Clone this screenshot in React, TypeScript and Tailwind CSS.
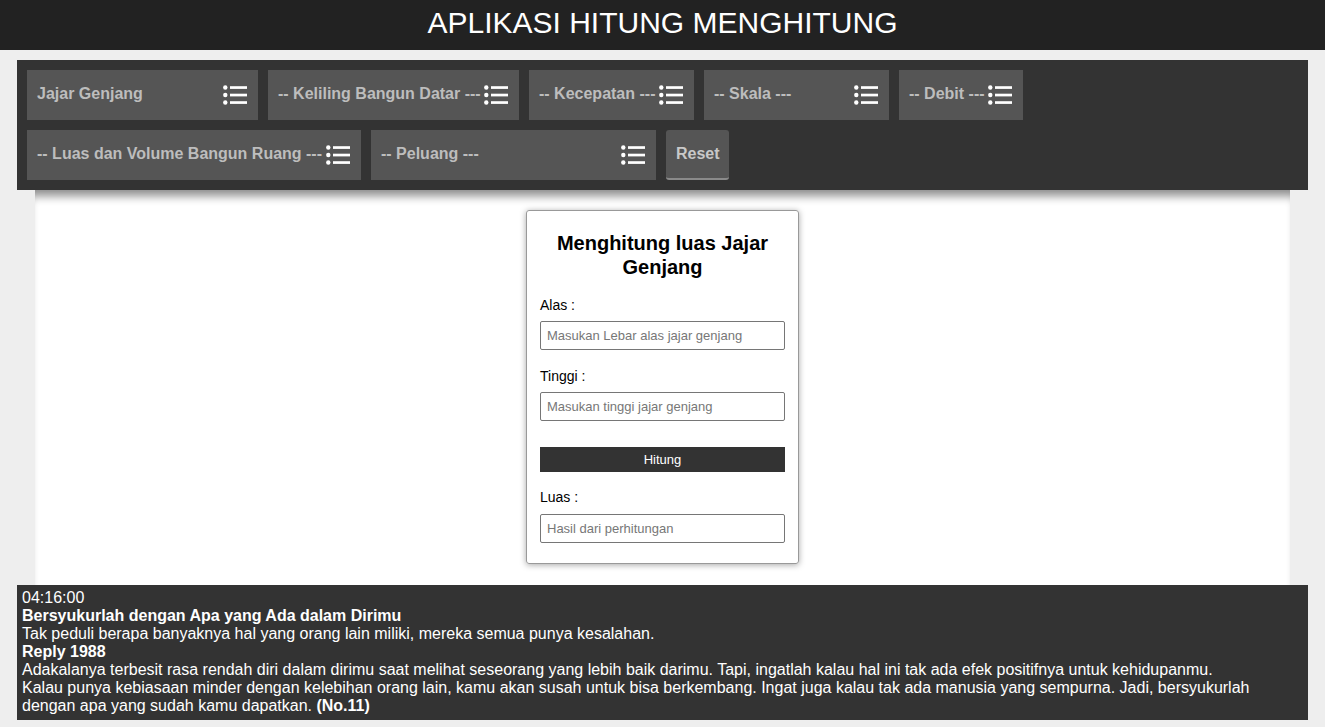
import React from "react";

function ListIcon() {
  return (
    <svg width="24" height="20" viewBox="0 0 24 20" fill="#fff" className="shrink-0">
      <circle cx="2.3" cy="2.5" r="2.2" />
      <circle cx="2.3" cy="10" r="2.2" />
      <circle cx="2.3" cy="17.5" r="2.2" />
      <rect x="7" y="1.2" width="17" height="2.7" />
      <rect x="7" y="8.7" width="17" height="2.7" />
      <rect x="7" y="16.2" width="17" height="2.7" />
    </svg>
  );
}

function SelectBox({ label, w }: { label: string; w: string }) {
  return (
    <div className={`relative h-[50px] ${w} bg-[#555] flex items-center pl-[10px] overflow-hidden`}>
      <span className="whitespace-nowrap text-[16px] font-bold text-[#bdbdbd] -mt-[2px]">{label}</span>
      <div className="absolute right-[11px] top-[15px] bg-[#555] pl-[1px]">
        <ListIcon />
      </div>
    </div>
  );
}

export default function App() {
  return (
    <div className="min-h-[727px] bg-[#eeeeee] font-['Liberation_Sans',Arial,sans-serif] text-black">
      <header className="h-[50px] bg-[#222] flex items-center justify-center">
        <h1 className="text-[30px] text-white leading-none -mt-[5px]">APLIKASI HITUNG MENGHITUNG</h1>
      </header>
      <div className="px-[17px] pt-[10px]">
        <nav className="bg-[#333] p-[10px] flex flex-col gap-[10px]">
          <div className="flex gap-[10px]">
            <SelectBox label="Jajar Genjang" w="w-[231px]" />
            <SelectBox label="-- Keliling Bangun Datar ---" w="w-[251px]" />
            <SelectBox label="-- Kecepatan ---" w="w-[165px]" />
            <SelectBox label="-- Skala ---" w="w-[185px]" />
            <SelectBox label="-- Debit ---" w="w-[124px]" />
          </div>
          <div className="flex gap-[10px]">
            <SelectBox label="-- Luas dan Volume Bangun Ruang ---" w="w-[334px]" />
            <SelectBox label="-- Peluang ---" w="w-[285px]" />
            <button className="h-[50px] w-[63px] bg-[#555] rounded-[3px] border-b-2 border-[#8a8a8a] text-[16px] font-bold text-[#c8c8c8] flex items-center pl-[10px]">
              Reset
            </button>
          </div>
        </nav>
        <main className="mx-[18px] bg-white pt-[20px] pb-[21px] flex justify-center shadow-[inset_0_12px_10px_-6px_rgba(0,0,0,0.45)]">
          <div className="w-[273px] border border-[#999] rounded-[3px] shadow-[0_1px_6px_rgba(0,0,0,0.35)] px-[13px] pt-[20px] pb-[20px]">
            <h2 className="text-[20px] font-bold text-center leading-[24px]">Menghitung luas Jajar Genjang</h2>
            <div className="mt-[18px] text-[14px] leading-[16px]">Alas :</div>
            <input
              className="mt-[8px] block w-full h-[29px] border border-[#767676] rounded-[2px] px-[6px] text-[13px] placeholder:text-[#777] outline-none"
              placeholder="Masukan Lebar alas jajar genjang"
            />
            <div className="mt-[18px] text-[14px] leading-[16px]">Tinggi :</div>
            <input
              className="mt-[8px] block w-full h-[29px] border border-[#767676] rounded-[2px] px-[6px] text-[13px] placeholder:text-[#777] outline-none"
              placeholder="Masukan tinggi jajar genjang"
            />
            <button className="mt-[26px] block w-full h-[25px] bg-[#333] text-white text-[13px]">Hitung</button>
            <div className="mt-[17px] text-[14px] leading-[16px]">Luas :</div>
            <input
              className="mt-[9px] block w-full h-[29px] border border-[#767676] rounded-[2px] px-[6px] text-[13px] placeholder:text-[#777] outline-none"
              placeholder="Hasil dari perhitungan"
            />
          </div>
        </main>
        <footer className="bg-[#333] text-white text-[16px] leading-[18px] px-[5px] pt-[4px] pb-[5px]">
          <div>04:16:00</div>
          <div className="font-bold">Bersyukurlah dengan Apa yang Ada dalam Dirimu</div>
          <div>Tak peduli berapa banyaknya hal yang orang lain miliki, mereka semua punya kesalahan.</div>
          <div className="font-bold">Reply 1988</div>
          <div>
            Adakalanya terbesit rasa rendah diri dalam dirimu saat melihat seseorang yang lebih baik darimu. Tapi, ingatlah kalau hal ini tak ada efek positifnya untuk kehidupanmu.
            <br />
            Kalau punya kebiasaan minder dengan kelebihan orang lain, kamu akan susah untuk bisa berkembang. Ingat juga kalau tak ada manusia yang sempurna. Jadi, bersyukurlah dengan apa yang sudah kamu dapatkan. <b>(No.11)</b>
          </div>
        </footer>
      </div>
    </div>
  );
}
